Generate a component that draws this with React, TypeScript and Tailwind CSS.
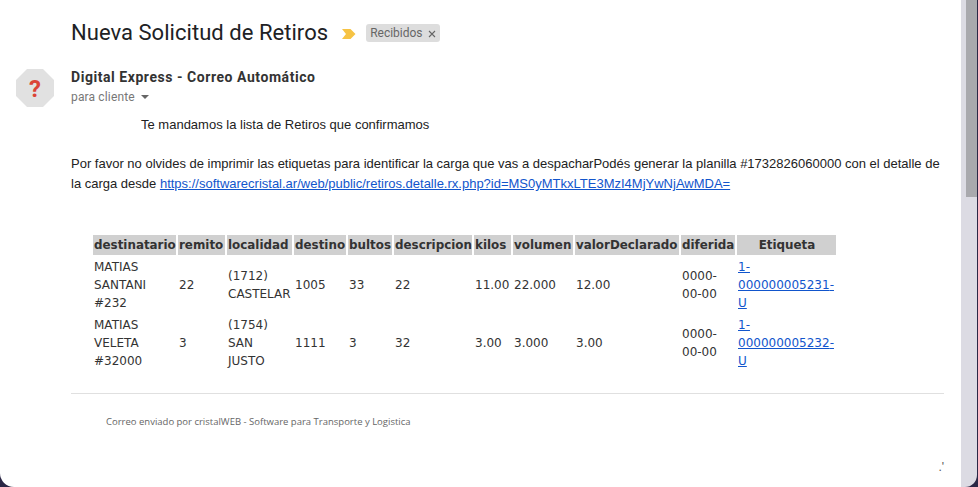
const rows = [
  { d: ["MATIAS", "SANTANI", "#232"], r: "22", l: ["(1712)", "CASTELAR"], de: "1005", b: "33", desc: "22", k: "11.00", v: "22.000", vd: "12.00", u: "000000005231" },
  { d: ["MATIAS", "VELETA", "#32000"], r: "3", l: ["(1754)", "SAN", "JUSTO"], de: "1111", b: "3", desc: "32", k: "3.00", v: "3.000", vd: "3.00", u: "000000005232" },
];
const widths = [83, 47, 65, 52, 44, 78, 37, 60, 104, 54, 99];
const heads = ["destinatario", "remito", "localidad", "destino", "bultos", "descripcion", "kilos", "volumen", "valorDeclarado", "diferida", "Etiqueta"];

function Lines({ items }: { items: string[] }) {
  return <>{items.map((t) => <div key={t}>{t}</div>)}</>;
}

export default function App() {
  return (
    <div className="w-[978px] h-[487px] bg-[#2b2745] overflow-hidden flex pr-px">
      <main className="flex-1 min-w-0 bg-white rounded-bl-[14px] pl-[16px] pr-[17px] font-['Roboto',sans-serif]">
        <div className="pl-[55px] pt-[19px] flex items-center h-[47px]">
          <h1 className="text-[22px] leading-[28px] text-[#202124] font-normal tracking-[0.04px]">Nueva Solicitud de Retiros</h1>
          <svg width="14" height="10" viewBox="0 0 14 10" className="ml-[14px] mt-[1px]">
            <path d="M0 0h8.5L13.5 5 8.5 10H0l4-5z" fill="#f6c344" />
          </svg>
          <span className="ml-[10px] h-[18px] pl-[4px] pr-[4px] rounded-[3px] bg-[#dddddd] text-[12px] leading-[18px] text-[#666666] flex items-center">
            Recibidos
            <svg width="8" height="8" viewBox="0 0 8 8" className="ml-[5px] mt-[1px]">
              <path d="M1 1l6 6M7 1L1 7" stroke="#666666" strokeWidth="1.1" />
            </svg>
          </span>
        </div>

        <div className="flex mt-[18px] h-[42px]">
          <svg width="38" height="38" viewBox="0 0 38 38" className="mt-[4px] shrink-0">
            <path d="M11 0h16l11 11v16L27 38H11L0 27V11z" fill="#e1e1e1" />
            <text x="19" y="28" textAnchor="middle" fontSize="24" fontWeight="700" fontFamily="Roboto, sans-serif" fill="#db4437">?</text>
          </svg>
          <div className="ml-[17px]">
            <div className="text-[14px] leading-[20px] font-bold text-[#333333] mt-[2px] tracking-[0.55px]">Digital Express - Correo Automático</div>
            <div className="flex items-center text-[12px] leading-[16px] text-[#777777] mt-[2px] tracking-[0.15px]">
              para cliente
              <svg width="8" height="4" viewBox="0 0 8 4" className="ml-[6px]"><path d="M0 0h8L4 4z" fill="#666666" /></svg>
            </div>
          </div>
        </div>

        <div className="pl-[55px] font-['Liberation_Sans',Arial,sans-serif] text-[13px] leading-[20px] text-[#222222]">
          <p className="pl-[70px] mt-[8px]">Te mandamos la lista de Retiros que confirmamos</p>
          <p className="mt-[19px] w-[875px]">
            Por favor no olvides de imprimir las etiquetas para identificar la carga que vas a despacharPodés generar la planilla #1732826060000 con el detalle de la carga desde{" "}
            <a className="text-[#1155cc] underline">https://softwarecristal.ar/web/public/retiros.detalle.rx.php?id=MS0yMTkxLTE3MzI4MjYwNjAwMDA=</a>
          </p>

          <table className="mt-[39px] ml-[20px] table-fixed w-[747px] border-separate border-spacing-[2px] font-['DejaVu_Sans',Verdana,sans-serif] text-[12px] leading-[18px] text-[#333333]">
            <colgroup>
              {widths.map((w, i) => <col key={i} style={{ width: w }} />)}
            </colgroup>
            <thead>
              <tr>
                {heads.map((h, i) => (
                  <th key={h} className={`h-[20px] p-0 pl-px bg-[#d0d0d0] text-[11.9px] font-bold whitespace-nowrap overflow-hidden ${i === 10 ? "text-center" : "text-left"}`}>{h}</th>
                ))}
              </tr>
            </thead>
            <tbody>
              {rows.map((r) => (
                <tr key={r.u}>
                  <td className="px-0 py-px pl-px"><Lines items={r.d} /></td>
                  <td className="px-0 py-px pl-px">{r.r}</td>
                  <td className="px-0 py-px pl-px"><Lines items={r.l} /></td>
                  <td className="px-0 py-px pl-px">{r.de}</td>
                  <td className="px-0 py-px pl-px">{r.b}</td>
                  <td className="px-0 py-px pl-px">{r.desc}</td>
                  <td className="px-0 py-px pl-px">{r.k}</td>
                  <td className="px-0 py-px pl-px">{r.v}</td>
                  <td className="px-0 py-px pl-px">{r.vd}</td>
                  <td className="px-0 py-px pl-px"><Lines items={["0000-", "00-00"]} /></td>
                  <td className="px-0 py-px pl-px">
                    <a className="text-[#1155cc] underline block">1-<br />{r.u}-<br />U</a>
                  </td>
                </tr>
              ))}
            </tbody>
          </table>

          <div className="mt-[20px] border-t border-[#e0e0e0] pt-[21px] pl-[35px] font-['Open_Sans',sans-serif] text-[9.5px] leading-[14px] text-[#666666]">
            Correo enviado por cristalWEB - Software para Transporte y Logistica
          </div>
          <div className="mt-[31px] text-right text-[12px] leading-[14px] text-[#555555]">.'</div>
        </div>
      </main>
      <div className="w-[16px] shrink-0 bg-[#dcdbe3] rounded-br-[12px] pl-[5px]">
        <div className="h-[197px] bg-[#a9a9ad]" />
      </div>
    </div>
  );
}
